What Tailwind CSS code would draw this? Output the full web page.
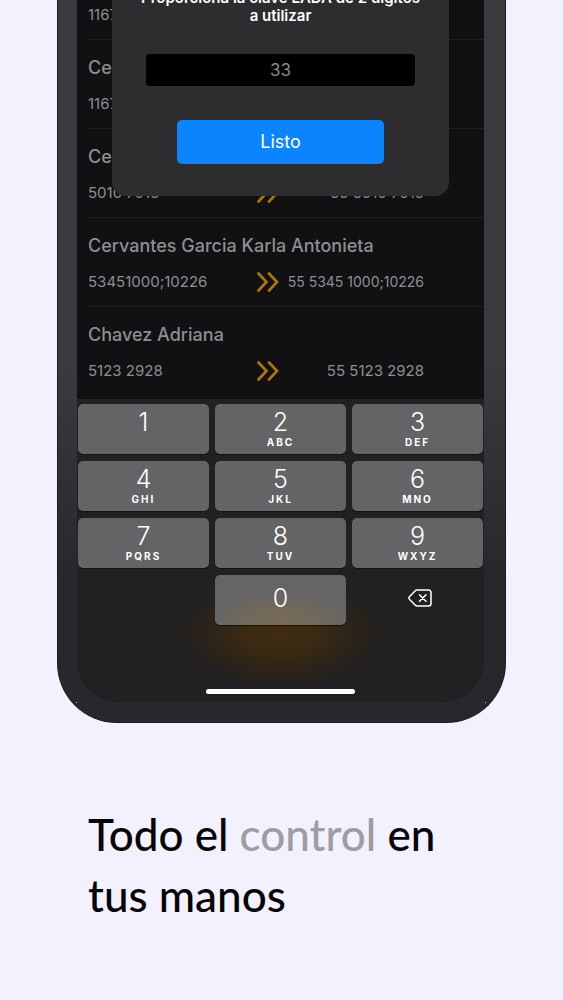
<!DOCTYPE html>
<html lang="es">
  <head>
    <meta charset="UTF-8" />
    <meta name="viewport" content="width=device-width, initial-scale=1.0" />
    <title>Todo el control en tus manos</title>
    <script src="https://cdn.jsdelivr.net/npm/@tailwindcss/browser@4"></script>
  </head>
  <body class="min-h-screen overflow-hidden bg-[#f4f1fe] font-['Inter','Liberation_Sans',sans-serif]">
    <!-- Chevron shared by the contact rows -->
    <svg class="hidden">
      <symbol id="chevrons" viewBox="0 0 22 20">
        <path d="M1.500 1.500l8 8.500-8 8.500M12 1.500l8 8.500-8 8.500" fill="none" stroke="currentColor" stroke-width="2.700" stroke-linecap="round" stroke-linejoin="miter" />
      </symbol>
    </svg>

    <!-- Phone -->
    <div class="relative mx-[57px] overflow-hidden rounded-b-[60px] border-x border-b border-[#1c1c20] bg-linear-to-b from-[#3b3a3e] from-50% to-[#28272b] to-80% pr-[21px] pb-5 pl-[19px]">
      <div class="overflow-hidden rounded-b-[42px] bg-[#111012]">
        <!-- Contacts -->
        <ul class="-mt-[49px] pb-[3px] text-[15px] text-[#8f8e91]">
          <li class="h-[89px] pl-[11px]">
            <div class="flex h-full flex-col border-b border-[#1e1d1f] pt-4 pr-[60px]">
              <h3 class="text-lg leading-6 font-medium">Cervantes</h3>
              <div class="mt-3 flex h-6 items-center"><span>1167 4000</span></div>
            </div>
          </li>
          <li class="h-[89px] pl-[11px]">
            <div class="flex h-full flex-col border-b border-[#1e1d1f] pt-4 pr-[60px]">
              <h3 class="text-lg leading-6 font-medium">Cervantes</h3>
              <div class="mt-3 flex h-6 items-center"><span>1167 4000</span></div>
            </div>
          </li>
          <li class="h-[89px] pl-[11px]">
            <div class="flex h-full flex-col border-b border-[#1e1d1f] pt-4 pr-[60px]">
              <h3 class="text-lg leading-6 font-medium">Cervantes</h3>
              <div class="mt-3 flex h-6 items-center">
                <span class="w-[169px]">5010 7015</span>
                <svg class="h-5 w-[22px] text-[#ad7412]"><use href="#chevrons" /></svg>
                <span class="flex-1 text-right">55 5010 7015</span>
              </div>
            </div>
          </li>
          <li class="h-[89px] pl-[11px]">
            <div class="flex h-full flex-col border-b border-[#1e1d1f] pt-4 pr-[60px]">
              <h3 class="text-lg leading-6 font-medium whitespace-nowrap">Cervantes Garcia Karla Antonieta</h3>
              <div class="mt-3 flex h-6 items-center">
                <span class="w-[169px]">53451000;10226</span>
                <svg class="h-5 w-[22px] text-[#ad7412]"><use href="#chevrons" /></svg>
                <span class="flex-1 text-right text-sm whitespace-nowrap">55 5345 1000;10226</span>
              </div>
            </div>
          </li>
          <li class="h-[89px] pl-[11px]">
            <div class="flex h-full flex-col pt-4 pr-[60px]">
              <h3 class="text-lg leading-6 font-medium">Chavez Adriana</h3>
              <div class="mt-3 flex h-6 items-center">
                <span class="w-[169px]">5123 2928</span>
                <svg class="h-5 w-[22px] text-[#ad7412]"><use href="#chevrons" /></svg>
                <span class="flex-1 text-right">55 5123 2928</span>
              </div>
            </div>
          </li>
        </ul>

        <!-- Keypad -->
        <div class="bg-[#212022] bg-[radial-gradient(ellipse_105px_56px_at_50%_77%,#402c12_0%,#3b2913_35%,#2c2319_70%,#212022_100%)] px-px pt-[5px] pb-2">
          <div class="grid grid-cols-3 gap-x-1.5 gap-y-[7px] text-white">
            <button class="flex h-[50px] flex-col items-center rounded-[5px] bg-[#646365] pt-1 shadow-[0_1px_0_#121113]">
              <span class="text-[25px] leading-7 font-light">1</span>
            </button>
            <button class="flex h-[50px] flex-col items-center rounded-[5px] bg-[#646365] pt-1 shadow-[0_1px_0_#121113]">
              <span class="text-[25px] leading-7 font-light">2</span>
              <span class="text-[10px] leading-3 font-bold tracking-[2px]">ABC</span>
            </button>
            <button class="flex h-[50px] flex-col items-center rounded-[5px] bg-[#646365] pt-1 shadow-[0_1px_0_#121113]">
              <span class="text-[25px] leading-7 font-light">3</span>
              <span class="text-[10px] leading-3 font-bold tracking-[2px]">DEF</span>
            </button>
            <button class="flex h-[50px] flex-col items-center rounded-[5px] bg-[#646365] pt-1 shadow-[0_1px_0_#121113]">
              <span class="text-[25px] leading-7 font-light">4</span>
              <span class="text-[10px] leading-3 font-bold tracking-[2px]">GHI</span>
            </button>
            <button class="flex h-[50px] flex-col items-center rounded-[5px] bg-[#646365] pt-1 shadow-[0_1px_0_#121113]">
              <span class="text-[25px] leading-7 font-light">5</span>
              <span class="text-[10px] leading-3 font-bold tracking-[2px]">JKL</span>
            </button>
            <button class="flex h-[50px] flex-col items-center rounded-[5px] bg-[#646365] pt-1 shadow-[0_1px_0_#121113]">
              <span class="text-[25px] leading-7 font-light">6</span>
              <span class="text-[10px] leading-3 font-bold tracking-[2px]">MNO</span>
            </button>
            <button class="flex h-[50px] flex-col items-center rounded-[5px] bg-[#646365] pt-1 shadow-[0_1px_0_#121113]">
              <span class="text-[25px] leading-7 font-light">7</span>
              <span class="text-[10px] leading-3 font-bold tracking-[2px]">PQRS</span>
            </button>
            <button class="flex h-[50px] flex-col items-center rounded-[5px] bg-[#646365] pt-1 shadow-[0_1px_0_#121113]">
              <span class="text-[25px] leading-7 font-light">8</span>
              <span class="text-[10px] leading-3 font-bold tracking-[2px]">TUV</span>
            </button>
            <button class="flex h-[50px] flex-col items-center rounded-[5px] bg-[#646365] pt-1 shadow-[0_1px_0_#121113]">
              <span class="text-[25px] leading-7 font-light">9</span>
              <span class="text-[10px] leading-3 font-bold tracking-[2px]">WXYZ</span>
            </button>
            <button class="col-start-2 flex h-[50px] items-center justify-center rounded-[5px] bg-[#666566] bg-[radial-gradient(ellipse_75px_32px_at_50%_100%,#786c57_0%,#716959_50%,#666566_100%)] pb-1 shadow-[0_1px_0_#121113]">
              <span class="text-[25px] leading-7 font-light">0</span>
            </button>
            <button class="flex h-[50px] items-center justify-center pb-1 pl-1" aria-label="Borrar">
              <svg class="h-[18px] w-6" viewBox="0 0 24 18" fill="none" stroke="currentColor" stroke-width="1.500" stroke-linecap="round" stroke-linejoin="round">
                <path d="M9 1H20.500a2.500 2.500 0 0 1 2.500 2.500v11a2.500 2.500 0 0 1-2.500 2.500H9q-1 0-1.700-.700L1.400 10.200q-1-1.200 0-2.400L7.300 1.700Q8 1 9 1z" />
                <path d="M11.500 5.700l6.500 6.600M18 5.700l-6.500 6.600" />
              </svg>
            </button>
          </div>
          <div class="mx-auto mt-16 h-[5px] w-[149px] rounded-full bg-white"></div>
        </div>
      </div>

      <!-- Dialog -->
      <div class="absolute top-0 right-14 left-[54px] flex flex-col items-center rounded-b-[14px] bg-[#2d2c2e] pb-8">
        <label for="lada" class="-mt-[11px] text-center text-[15px] leading-[18px] font-semibold text-white">
          Proporciona la clave LADA de 2 dígitos<br />a utilizar
        </label>
        <input
          id="lada"
          type="text"
          inputmode="numeric"
          placeholder="33"
          class="mt-[29px] h-8 w-4/5 rounded-[4px] bg-black text-center text-[17px] text-white placeholder:text-[#8a898c] focus:outline-none"
        />
        <button class="mt-[34px] h-11 w-[207px] rounded-[5px] bg-[#0b84fe] text-lg text-white">Listo</button>
      </div>

      <!-- Corner glints -->
      <span class="absolute bottom-[19px] left-[18px] size-px bg-[#c9c8cc]"></span>
      <span class="absolute right-[19px] bottom-[19px] size-px bg-[#c9c8cc]"></span>
    </div>

    <h1 class="mt-[81px] px-[88px] font-['Lato',sans-serif] text-[44px] leading-[61px] font-medium text-[#050507]">
      Todo el <span class="text-[#9f9ca6]">control</span> en<br />tus manos
    </h1>
  </body>
</html>
